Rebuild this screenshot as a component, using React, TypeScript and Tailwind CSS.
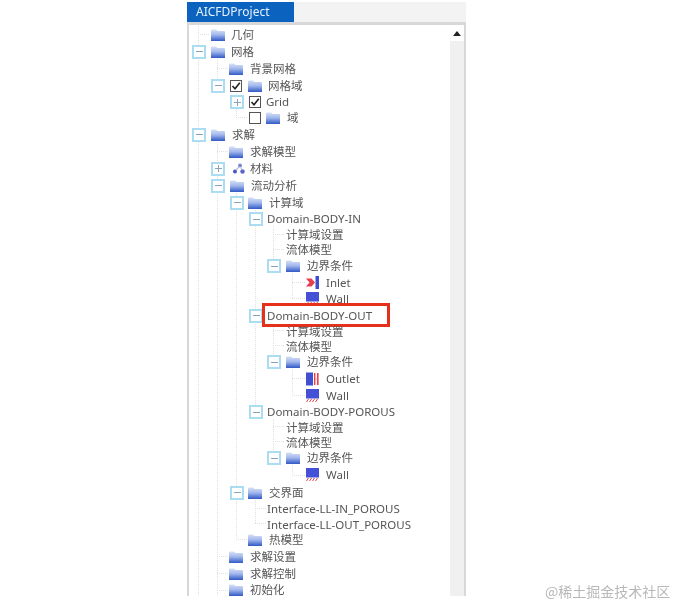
import React from "react";

const Folder = ({ cls = "" }: { cls?: string }) => (
  <svg width="14" height="12" viewBox="0 0 14 12" className={`shrink-0 ${cls}`}>
    <defs>
      <linearGradient id="fg" x1="0" y1="0" x2="0" y2="1">
        <stop offset="0" stopColor="#d6e0f6" />
        <stop offset="0.45" stopColor="#a3b8ec" />
        <stop offset="1" stopColor="#3059c6" />
      </linearGradient>
    </defs>
    <path d="M0 1.5 Q0 0.5 1 0.5 L5 0.5 L6.5 2 L13 2 Q14 2 14 3 L14 12 L0 12 Z" fill="url(#fg)" />
  </svg>
);

const Exp = ({ plus = false, cls = "" }: { plus?: boolean; cls?: string }) => (
  <span className={`relative flex h-[14px] w-[14px] shrink-0 items-center justify-center border-2 border-[#aadcf2] bg-white ${cls}`}>
    <span className="h-px w-[7px] bg-[#8aa3b5]" />
    {plus && <span className="absolute h-[7px] w-px bg-[#8aa3b5]" />}
  </span>
);

const Check = ({ on = false, cls = "" }: { on?: boolean; cls?: string }) => (
  <span className={`flex h-3 w-3 shrink-0 items-center justify-center border border-[#555] bg-white ${cls}`}>
    {on && (
      <svg width="10" height="10" viewBox="0 0 10 10">
        <path d="M1.5 5 L4 7.8 L8.8 1.8" fill="none" stroke="#222" strokeWidth="1.6" />
      </svg>
    )}
  </span>
);

const Inlet = () => (
  <svg width="13" height="13" viewBox="0 0 13 13" className="shrink-0">
    <path d="M0 2.5 H5.5 L9 6.5 L5.5 10.5 H0 L3.5 6.5 Z" fill="#e5404c" />
    <rect x="9.5" y="0" width="3.5" height="13" fill="#3f4fd0" />
  </svg>
);

const Outlet = () => (
  <svg width="13" height="14" viewBox="0 0 13 14" className="shrink-0">
    <rect x="0" y="0.5" width="7" height="13" fill="#3f4fd0" />
    <rect x="8" y="1" width="1.4" height="12" fill="#e5404c" />
    <rect x="11" y="1" width="1.6" height="12" fill="#e5404c" />
    <path d="M9 7 L11.5 7" stroke="#e89aa0" />
  </svg>
);

const WallIcon = () => (
  <svg width="13" height="14" viewBox="0 0 13 14" className="shrink-0">
    <rect x="0" y="0" width="13" height="9.5" fill="#4450d6" />
    <path d="M0.5 13 L2.5 10 M3.5 13 L5.5 10 M6.5 13 L8.5 10 M9.5 13 L11.5 10" stroke="#e5404c" strokeWidth="1" />
  </svg>
);

const Material = () => (
  <svg width="14" height="12" viewBox="0 0 14 12" className="shrink-0">
    <circle cx="8" cy="2.5" r="2" fill="#7f86d8" />
    <circle cx="3" cy="8.5" r="2" fill="#4a52c4" />
    <circle cx="10.5" cy="8.5" r="2.2" fill="#5a62c8" />
    <path d="M7 4 L4 7 M9 4.5 L10 7" stroke="#b7bce8" strokeWidth="1.2" />
  </svg>
);

const Label = ({ cls = "", children }: { cls?: string; children: React.ReactNode }) => (
  <span className={`relative z-10 whitespace-nowrap leading-none ${cls}`}>{children}</span>
);

const Row = ({ cls, children }: { cls: string; children: React.ReactNode }) => (
  <div className={`relative z-10 flex items-center ${cls}`}>{children}</div>
);

const vLines: [number, number, number][] = [
  [198, 26, 596],
  [217, 59, 85],
  [217, 142, 596],
  [236, 93, 117],
  [236, 193, 539],
  [255, 210, 411],
  [255, 500, 523],
  [273, 226, 265],
  [273, 323, 361],
  [273, 419, 457],
  [292, 273, 298],
  [292, 369, 395],
  [292, 465, 475],
];

const hLines: [number, number, number][] = [
  [198, 210, 34],
  [217, 228, 68],
  [236, 248, 117],
  [217, 228, 151],
  [236, 247, 539],
  [273, 285, 234],
  [273, 285, 249],
  [292, 305, 282],
  [292, 305, 298],
  [273, 285, 330],
  [273, 285, 345],
  [292, 305, 378],
  [292, 305, 395],
  [273, 285, 426],
  [273, 285, 441],
  [292, 305, 475],
  [255, 266, 508],
  [255, 266, 523],
  [217, 228, 556],
  [217, 228, 573],
  [217, 228, 590],
];

export default function App() {
  return (
    <div
      className="relative h-[604px] w-[677px] overflow-hidden bg-white pl-[187px] pt-[2px] text-[11.5px] text-[#555] blur-[0.35px]"
      style={{ fontFamily: '"Noto Sans", "Noto Sans CJK SC", sans-serif' }}
    >
      <div className="relative h-[594px] w-[279px]">
        <div className="flex h-[20px] bg-[#f3f3f3]">
          <div className="flex w-[107px] items-center bg-[#0b63bf] pl-[9px] text-[12px] text-[#e8f1fb]">AICFDProject</div>
        </div>
        <div className="flex h-[574px] flex-col border-x-2 border-t-[3px] border-b-0 border-[#d8d8d8] bg-white">
          <div className="flex min-h-0 flex-1">
            <div className="min-w-0 flex-1 overflow-hidden pl-[1px] pt-[2px]">
              <Row cls="h-4 pl-[21px]"><Folder /><Label cls="ml-[6px]">几何</Label></Row>
              <Row cls="h-[17px] pl-[2px]"><Exp /><Folder cls="ml-[5px]" /><Label cls="ml-[6px]">网格</Label></Row>
              <Row cls="h-[17px] pl-[39px]"><Folder /><Label cls="ml-[7px]">背景网格</Label></Row>
              <Row cls="h-[17px] pl-[21px]"><Exp /><Check on cls="ml-[5px]" /><Folder cls="ml-[6px]" /><Label cls="ml-[6px]">网格域</Label></Row>
              <Row cls="h-4 pl-[40px]"><Exp plus /><Check on cls="ml-[5px]" /><Label cls="ml-[5px]">Grid</Label></Row>
              <Row cls="h-4 pl-[59px]"><Check /><Folder cls="ml-[5px]" /><Label cls="ml-[7px]">域</Label></Row>
              <Row cls="h-[17px] pl-[2px]"><Exp /><Folder cls="ml-[5px]" /><Label cls="ml-[7px]">求解</Label></Row>
              <Row cls="h-[17px] pl-[39px]"><Folder /><Label cls="ml-[7px]">求解模型</Label></Row>
              <Row cls="h-[17px] pl-[21px]"><Exp plus /><span className="ml-[7px] flex"><Material /></span><Label cls="ml-[4px]">材料</Label></Row>
              <Row cls="h-[17px] pl-[21px]"><Exp /><Folder cls="ml-[5px]" /><Label cls="ml-[7px]">流动分析</Label></Row>
              <Row cls="h-[17px] pl-[40px]"><Exp /><Folder cls="ml-[4px]" /><Label cls="ml-[7px]">计算域</Label></Row>
              <Row cls="h-4 pl-[59px]"><Exp /><Label cls="ml-[4px]">Domain-BODY-IN</Label></Row>
              <Row cls="h-[15px] pl-[96px]"><Label>计算域设置</Label></Row>
              <Row cls="h-4 pl-[96px]"><Label>流体模型</Label></Row>
              <Row cls="h-4 pl-[77px]"><Exp /><Folder cls="ml-[5px]" /><Label cls="ml-[7px]">边界条件</Label></Row>
              <Row cls="h-[17px] pl-[116px]"><Inlet /><Label cls="ml-[7px]">Inlet</Label></Row>
              <Row cls="h-4 pl-[116px]"><WallIcon /><Label cls="ml-[7px]">Wall</Label></Row>
              <Row cls="h-[17px] pl-[59px]">
                <Exp />
                <Label cls="ml-[4px]">Domain-BODY-OUT</Label>
                <span className="absolute left-[72px] top-[-4px] z-0 h-6 w-[128px] border-[3px] border-[#e5301a] bg-white" />
              </Row>
              <Row cls="z-0 h-[15px] pl-[96px]"><Label>计算域设置</Label></Row>
              <Row cls="h-[15px] pl-[96px]"><Label>流体模型</Label></Row>
              <Row cls="h-4 pl-[77px]"><Exp /><Folder cls="ml-[5px]" /><Label cls="ml-[7px]">边界条件</Label></Row>
              <Row cls="h-[17px] pl-[116px]"><Outlet /><Label cls="ml-[7px]">Outlet</Label></Row>
              <Row cls="h-[17px] pl-[116px]"><WallIcon /><Label cls="ml-[7px]">Wall</Label></Row>
              <Row cls="h-4 pl-[59px]"><Exp /><Label cls="ml-[4px]">Domain-BODY-POROUS</Label></Row>
              <Row cls="h-[15px] pl-[96px]"><Label>计算域设置</Label></Row>
              <Row cls="h-[15px] pl-[96px]"><Label>流体模型</Label></Row>
              <Row cls="h-4 pl-[77px]"><Exp /><Folder cls="ml-[5px]" /><Label cls="ml-[7px]">边界条件</Label></Row>
              <Row cls="h-[18px] pl-[116px]"><WallIcon /><Label cls="ml-[7px]">Wall</Label></Row>
              <Row cls="h-[17px] pl-[40px]"><Exp /><Folder cls="ml-[4px]" /><Label cls="ml-[7px]">交界面</Label></Row>
              <Row cls="h-4 pl-[77px]"><Label>Interface-LL-IN_POROUS</Label></Row>
              <Row cls="h-[15px] pl-[77px]"><Label>Interface-LL-OUT_POROUS</Label></Row>
              <Row cls="h-4 pl-[58px]"><Folder /><Label cls="ml-[7px]">热模型</Label></Row>
              <Row cls="h-[17px] pl-[39px]"><Folder /><Label cls="ml-[7px]">求解设置</Label></Row>
              <Row cls="h-[17px] pl-[39px]"><Folder /><Label cls="ml-[7px]">求解控制</Label></Row>
              <Row cls="h-[15px] pl-[39px]"><Folder /><Label cls="ml-[7px]">初始化</Label></Row>
            </div>
            <div className="flex w-[14px] shrink-0 flex-col bg-[#f0f0f0]">
              <div className="flex h-[16px] items-center justify-center bg-white">
                <span className="h-0 w-0 border-x-[4px] border-b-[5px] border-x-transparent border-b-[#222]" />
              </div>
            </div>
          </div>
        </div>
        <svg className="absolute left-0 top-0 z-0" width="279" height="594">
          <g transform="translate(-187 -2)" stroke="#e0e0e0" strokeDasharray="1 1" fill="none">
            {vLines.map(([x, a, b], i) => (
              <line key={`v${i}`} x1={x + 0.5} y1={a} x2={x + 0.5} y2={b} />
            ))}
            {hLines.map(([a, b, y], i) => (
              <line key={`h${i}`} x1={a} y1={y + 0.5} x2={b} y2={y + 0.5} />
            ))}
          </g>
        </svg>
      </div>
      <span
        className="absolute left-[545px] top-[582px] whitespace-nowrap text-[14px] leading-[18px] text-[#b8b8b8]"
        style={{ fontFamily: '"Noto Sans CJK SC", sans-serif' }}
      >
        @稀土掘金技术社区
      </span>
    </div>
  );
}
